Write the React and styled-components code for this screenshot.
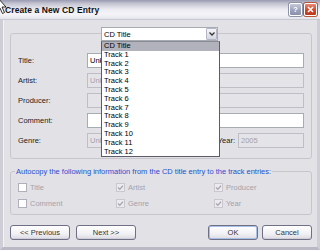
import React from "react";
import styled, { createGlobalStyle } from "styled-components";

const GlobalStyle = createGlobalStyle`
  html, body {
    margin: 0;
    padding: 0;
    background: #e2e1e6;
  }
  body {
    font-family: "Liberation Sans", Arial, sans-serif;
    font-size: 7.5px;
    color: #000;
  }
`;

const Window = styled.div`
  position: relative;
  width: 320px;
  height: 250px;
  box-sizing: border-box;
  display: flex;
  flex-direction: column;
  background: #e2e1e6;
  overflow: hidden;
`;

const TitleBar = styled.div`
  height: 19px;
  flex: none;
  display: flex;
  align-items: center;
  padding: 0 3px 0 5px;
  background: linear-gradient(
    #9a9ab2 0%,
    #c6c6d4 20%,
    #ececf2 50%,
    #f4f4f8 75%,
    #e4e4ec 100%
  );
  border-bottom: 1px solid #c8c8d2;
`;

const Caption = styled.span`
  flex: 1;
  font-weight: bold;
  font-size: 8.5px;
  color: #111;
  letter-spacing: 0.1px;
`;

const CaptionButton = styled.div`
  width: 13px;
  height: 13px;
  margin-left: 2px;
  box-sizing: border-box;
  border-radius: 2px;
  border: 1px solid #fff;
  display: flex;
  align-items: center;
  justify-content: center;
  color: #fff;
  font-weight: bold;
  font-size: 8px;
  background: ${(p) =>
    p.$close
      ? "linear-gradient(#e88a74, #d2452a 55%, #c0371e)"
      : "linear-gradient(#c4c8d8, #9ca2bc 55%, #8a90aa)"};
  box-shadow: 0 0 0 1px ${(p) => (p.$close ? "#b5583e" : "#8e93a8")};
`;

const Frame = styled.div`
  flex: 1;
  display: flex;
  flex-direction: column;
  padding: 13px 5px 7px 7px;
  border-left: 3px solid #cfced6;
  border-right: 3px solid #cfced6;
  border-bottom: 3px solid #b9b8c4;
  box-shadow: inset 1px 0 0 #f4f4f8;
`;

const GroupBox = styled.div`
  width: 302px;
  box-sizing: border-box;
  border: 1px solid #c7c6cd;
  border-radius: 3px;
  margin-top: ${(p) => p.$gap || 0}px;
  padding: 0 7px ${(p) => p.$bottom}px 7px;
  display: flex;
  flex-direction: column;
`;

const ComboLegend = styled.div`
  position: relative;
  align-self: flex-start;
  width: 117px;
  height: 14px;
  box-sizing: border-box;
  margin: -7px 0 12px 83px;
  border: 1px solid #a5acb2;
  background: #fff;
  display: flex;
  align-items: center;
  padding-left: 2px;
`;

const ComboText = styled.span`
  flex: 1;
`;

const DropButton = styled.div`
  width: 11px;
  height: 12px;
  box-sizing: border-box;
  border: 1px solid #b4b8c6;
  border-radius: 1px;
  background: linear-gradient(#f4f4f8, #d6d7e0);
  display: flex;
  align-items: center;
  justify-content: center;
`;

const DropList = styled.ul`
  position: absolute;
  left: -1px;
  top: 13px;
  width: 117px;
  margin: 0;
  padding: 0;
  list-style: none;
  background: #fff;
  border: 1px solid #5c5c66;
  border-top-color: #8a8a94;
  z-index: 5;
`;

const DropItem = styled.li`
  height: 8.8px;
  line-height: 8.8px;
  padding-left: 2px;
  background: ${(p) => (p.$selected ? "#b1b2bc" : "transparent")};
`;

const Rows = styled.div`
  display: flex;
  flex-direction: column;
  gap: 5px;
`;

const Row = styled.div`
  display: flex;
  align-items: center;
  height: 15px;
`;

const Label = styled.span`
  width: 69px;
  flex: none;
  color: #222;
`;

const Field = styled.div`
  height: 15px;
  box-sizing: border-box;
  width: ${(p) => (p.$w ? `${p.$w}px` : "auto")};
  flex: ${(p) => (p.$w ? "none" : 1)};
  border: 1px solid ${(p) => (p.$disabled ? "#bfbec6" : "#a5acb2")};
  background: ${(p) => (p.$disabled ? "#e4e3e8" : "#fff")};
  color: ${(p) => (p.$disabled ? "#a3a2aa" : "#000")};
  display: flex;
  align-items: center;
  padding-left: 2px;
  overflow: hidden;
  white-space: nowrap;
`;

const YearLabel = styled.span`
  margin: 0 3px 0 4px;
  color: #222;
`;

const TextLegend = styled.div`
  align-self: flex-start;
  margin: -5px 0 7px -3px;
  padding: 0 1px;
  height: 9px;
  line-height: 9px;
  background: #e2e1e6;
  color: #1f4fd0;
`;

const CheckGrid = styled.div`
  display: grid;
  grid-template-columns: 98px 98px 1fr;
  row-gap: 7px;
`;

const CheckItem = styled.div`
  display: flex;
  align-items: center;
  gap: 3px;
  height: 9px;
  color: #a4a3ab;
`;

const Box = styled.div`
  width: 9px;
  height: 9px;
  box-sizing: border-box;
  border: 1px solid ${(p) => (p.$checked ? "#c9c8cf" : "#b0b0ba")};
  background: ${(p) => (p.$checked ? "#eceaf0" : "#fff")};
  display: flex;
  align-items: center;
  justify-content: center;
`;

const ButtonRow = styled.div`
  display: flex;
  margin-top: 10px;
  gap: 6px;
`;

const Spacer = styled.div`
  flex: 1;
`;

const Button = styled.div`
  width: ${(p) => p.$w}px;
  height: 15px;
  box-sizing: border-box;
  border: 1px solid #6f6f86;
  border-radius: 3px;
  background: linear-gradient(#ffffff, #f1f0f4 60%, #dcdbe2);
  box-shadow: ${(p) =>
    p.$default ? "inset 0 0 0 1px #a9c0e6" : "inset 0 -1px 0 #cfcfd8"};
  display: flex;
  align-items: center;
  justify-content: center;
  color: #333;
  margin-left: ${(p) => p.$ml || 0}px;
`;

const Cursor = styled.svg`
  position: absolute;
  left: 0;
  top: 0;
  z-index: 10;
`;

const tracks = ["CD Title"].concat(
  Array.from({ length: 12 }, (_, i) => `Track ${i + 1}`)
);

const Check = ({ checked, label }) => (
  <CheckItem>
    <Box $checked={checked}>
      {checked && (
        <svg width="7" height="7" viewBox="0 0 7 7">
          <path d="M1 3.5 L2.8 5.3 L6 1.8" fill="none" stroke="#a9a8b0" strokeWidth="1.3" />
        </svg>
      )}
    </Box>
    {label}
  </CheckItem>
);

export default function App() {
  return (
    <>
      <GlobalStyle />
      <Window>
        <Cursor width="8" height="16" viewBox="0 0 8 16">
          <path d="M-3 -3 L-3 11 L0 8 L2.5 13.5 L4.5 12.5 L2 7 L6 7 Z" fill="#fff" stroke="#000" strokeWidth="0.8" />
        </Cursor>
        <TitleBar>
          <Caption>Create a New CD Entry</Caption>
          <CaptionButton>?</CaptionButton>
          <CaptionButton $close>
            <svg width="7" height="7" viewBox="0 0 7 7">
              <path d="M1 1 L6 6 M6 1 L1 6" stroke="#fff" strokeWidth="1.6" />
            </svg>
          </CaptionButton>
        </TitleBar>
        <Frame>
          <GroupBox $bottom={10}>
            <ComboLegend>
              <ComboText>CD Title</ComboText>
              <DropButton>
                <svg width="6" height="4" viewBox="0 0 6 4">
                  <path d="M0.5 0.5 L3 3 L5.5 0.5" fill="none" stroke="#333" strokeWidth="1.3" />
                </svg>
              </DropButton>
              <DropList>
                {tracks.map((t, i) => (
                  <DropItem key={t} $selected={i === 0}>
                    {t}
                  </DropItem>
                ))}
              </DropList>
            </ComboLegend>
            <Rows>
              <Row>
                <Label>Title:</Label>
                <Field>Unknown</Field>
              </Row>
              <Row>
                <Label>Artist:</Label>
                <Field $disabled>Unknown</Field>
              </Row>
              <Row>
                <Label>Producer:</Label>
                <Field $disabled />
              </Row>
              <Row>
                <Label>Comment:</Label>
                <Field />
              </Row>
              <Row>
                <Label>Genre:</Label>
                <Field $disabled>Unknown</Field>
                <YearLabel>Year:</YearLabel>
                <Field $disabled $w={66}>2005</Field>
              </Row>
            </Rows>
          </GroupBox>
          <GroupBox $gap={12} $bottom={6}>
            <TextLegend>
              Autocopy the following information from the CD title entry to the track entries:
            </TextLegend>
            <CheckGrid>
              <Check label="Title" />
              <Check checked label="Artist" />
              <Check checked label="Producer" />
              <Check label="Comment" />
              <Check checked label="Genre" />
              <Check checked label="Year" />
            </CheckGrid>
          </GroupBox>
          <ButtonRow>
            <Button $w={60}>&lt;&lt; Previous</Button>
            <Button $w={60}>Next &gt;&gt;</Button>
            <Spacer />
            <Button $w={50} $default>OK</Button>
            <Button $w={50} $ml={-2}>Cancel</Button>
          </ButtonRow>
        </Frame>
      </Window>
    </>
  );
}
